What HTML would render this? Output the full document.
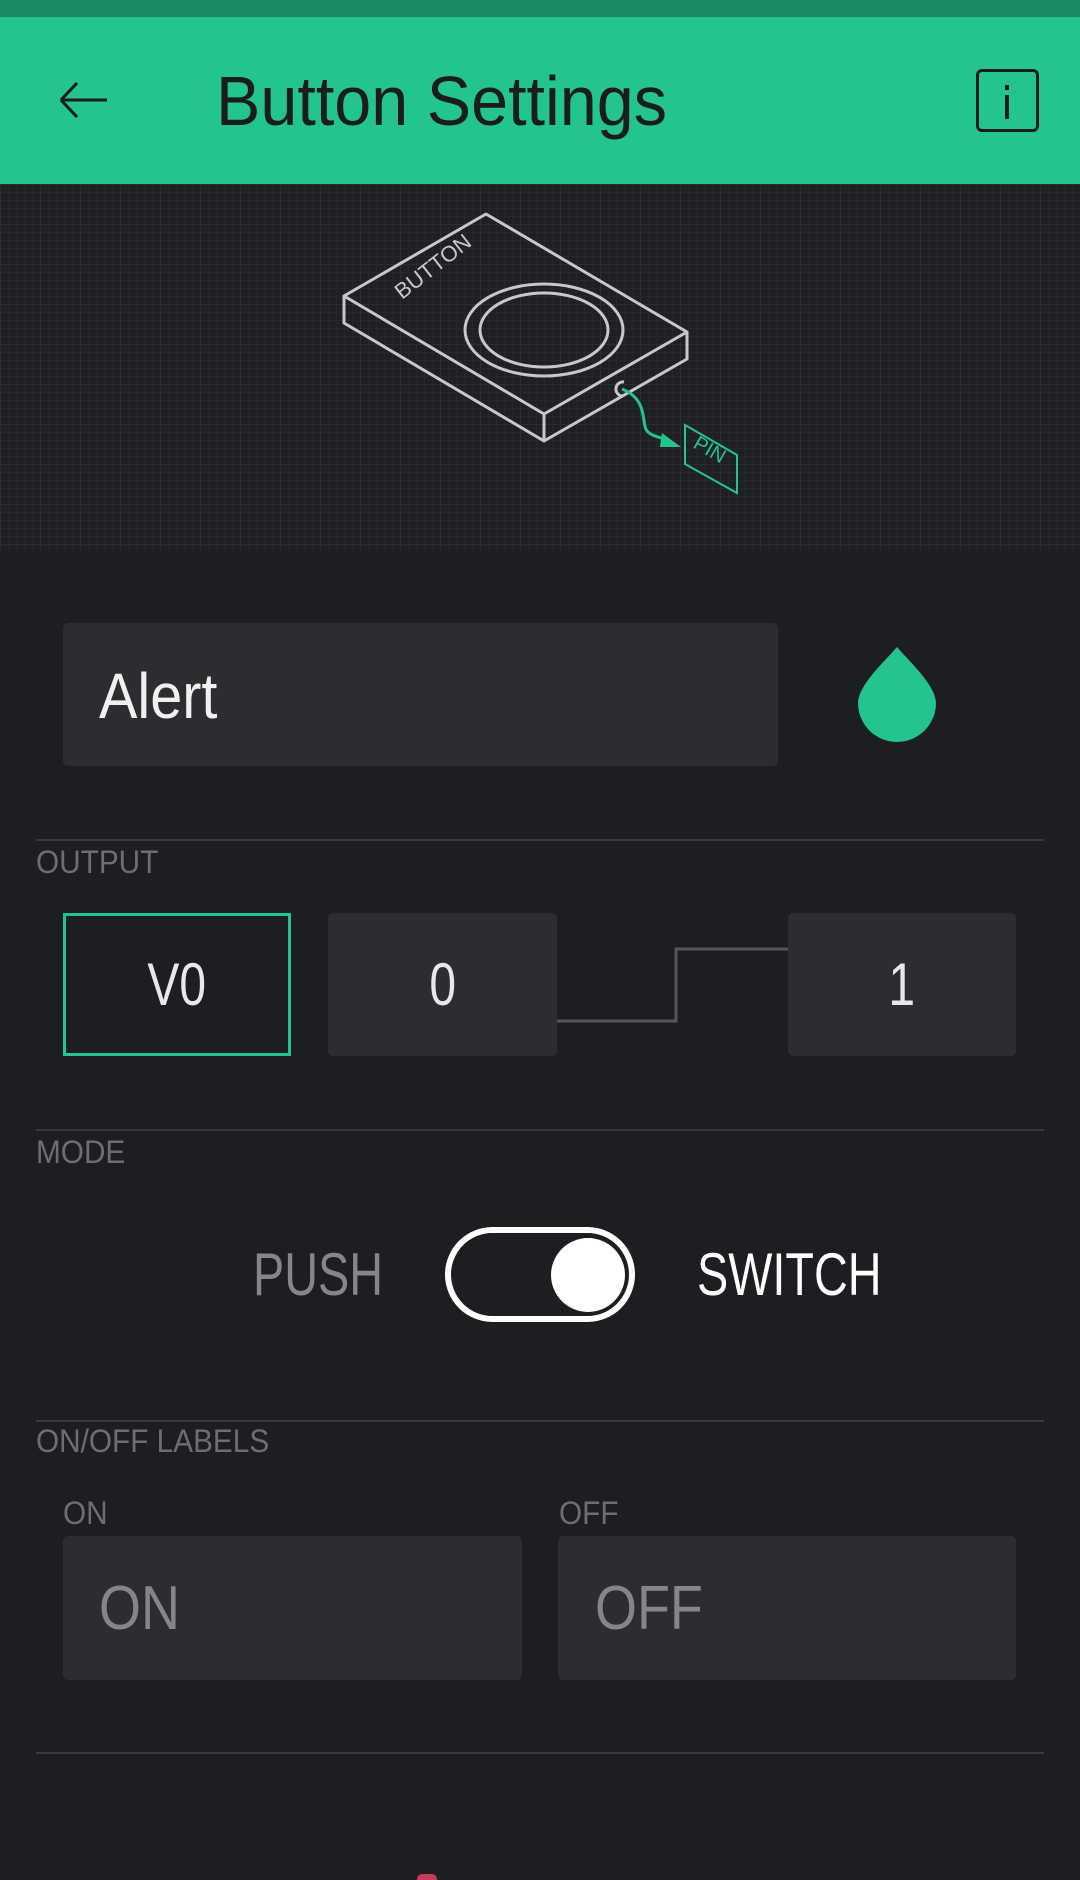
<!DOCTYPE html>
<html><head><meta charset="utf-8"><style>
*{margin:0;padding:0;box-sizing:border-box}
body{width:1080px;height:1877px;background:#1d1e22;position:relative;overflow:hidden;font-family:"Liberation Sans",sans-serif}
.a{position:absolute}
.t{position:absolute;white-space:nowrap;transform-origin:left center;transform:scaleX(0.8);line-height:1}
.box{position:absolute;background:#2c2d31;border-radius:5px}
.hr{position:absolute;left:36px;width:1008px;height:2px;background:#38393d}
.lbl{position:absolute;color:#6d6e72;font-size:32px;white-space:nowrap;transform-origin:left center;transform:scaleX(0.93);line-height:1}
.c{position:absolute;display:flex;align-items:center;justify-content:center;color:#e8e8e8;font-size:60px}
.c span{display:inline-block;transform:scaleX(0.8)}
</style></head><body>
<div class="a" style="left:0;top:0;width:1080px;height:17px;background:#1a8a63"></div>
<div class="a" style="left:0;top:17px;width:1080px;height:167px;background:#23c48e"></div>
<svg class="a" style="left:55px;top:75px" width="60" height="50" viewBox="0 0 60 50"><path d="M6 25H52M6 25L22 8M6 25L22 42" stroke="#1b1c1f" stroke-width="3" fill="none"/></svg>
<div class="t" style="left:216px;top:66px;font-size:70px;color:#1b1c1f;transform:scaleX(0.95)">Button Settings</div>
<div class="a" style="left:976px;top:69px;width:63px;height:63px;border:3px solid #1b1c1f;border-radius:6px"></div>
<div class="a" style="left:1005px;top:85px;width:4px;height:5px;background:#1b1c1f"></div>
<div class="a" style="left:1005px;top:95px;width:4px;height:24px;background:#1b1c1f"></div>
<div class="a" style="left:0;top:184px;width:1080px;height:367px;background-color:#1f2024;background-image:linear-gradient(#2c2d31 1px,transparent 1px),linear-gradient(90deg,#2c2d31 1px,transparent 1px),linear-gradient(#26272b 1px,transparent 1px),linear-gradient(90deg,#26272b 1px,transparent 1px);background-size:40px 40px,40px 40px,8px 8px,8px 8px"></div>
<svg class="a" style="left:0;top:0" width="1080" height="560">
<g fill="none" stroke="#c8c8c8" stroke-width="3" stroke-linejoin="round">
<path d="M486 214L344 296L544 414L687 332Z"/>
<path d="M344 296V323L544 441L687 359V332"/>
<path d="M544 414V441"/>
<ellipse cx="544" cy="330" rx="79" ry="46"/>
<ellipse cx="544" cy="330" rx="64" ry="37"/>
<path d="M624 382a6 6 0 1 0 -2 14"/>
</g>
<text x="0" y="0" fill="#c8c8c8" font-size="22" font-family="Liberation Sans" transform="translate(402 300) rotate(-38)">BUTTON</text>
<path d="M622 389C650 400 640 425 648 432C655 438 660 436 670 442" stroke="#23c48e" stroke-width="3" fill="none"/>
<path d="M662 433L681 447L660 447Z" fill="#23c48e"/>
<path d="M685 425L737 455V493L685 464Z" stroke="#23c48e" stroke-width="2" fill="none"/>
<text x="0" y="0" fill="#23c48e" font-size="20" font-family="Liberation Sans" transform="translate(692 447) rotate(30)">PIN</text>
</svg>
<div class="box" style="left:63px;top:623px;width:715px;height:143px"></div>
<div class="t" style="left:99px;top:664px;font-size:64px;color:#f0f0f0;transform:scaleX(0.9)">Alert</div>
<svg class="a" style="left:855px;top:645px" width="85" height="100" viewBox="0 0 85 100"><path d="M42 2C32 14 3 40 3 58a39 39 0 0 0 78 0C81 40 52 14 42 2Z" fill="#23c48e"/></svg>
<div class="hr" style="top:839px"></div>
<div class="lbl" style="left:36px;top:846px">OUTPUT</div>
<div class="c" style="left:63px;top:913px;width:228px;height:143px;border:3px solid #23c48e"><span>V0</span></div>
<div class="box c" style="left:328px;top:913px;width:229px;height:143px"><span>0</span></div>
<div class="box c" style="left:788px;top:913px;width:228px;height:143px"><span>1</span></div>
<svg class="a" style="left:0;top:0" width="1080" height="1100"><path d="M557 1021H676V949H788" stroke="#55565a" stroke-width="3" fill="none"/></svg>
<div class="hr" style="top:1129px"></div>
<div class="lbl" style="left:36px;top:1136px">MODE</div>
<div class="t" style="left:253px;top:1245px;font-size:60px;color:#85868a;transform:scaleX(0.78)">PUSH</div>
<div class="a" style="left:445px;top:1227px;width:190px;height:95px;border:6px solid #fff;border-radius:48px"></div>
<div class="a" style="left:551px;top:1238px;width:74px;height:74px;border-radius:50%;background:#fff"></div>
<div class="t" style="left:697px;top:1245px;font-size:60px;color:#fff;transform:scaleX(0.78)">SWITCH</div>
<div class="hr" style="top:1420px"></div>
<div class="lbl" style="left:36px;top:1425px">ON/OFF LABELS</div>
<div class="lbl" style="left:63px;top:1497px">ON</div>
<div class="lbl" style="left:559px;top:1497px">OFF</div>
<div class="box" style="left:63px;top:1536px;width:459px;height:144px"></div>
<div class="box" style="left:558px;top:1536px;width:458px;height:144px"></div>
<div class="t" style="left:99px;top:1578px;font-size:62px;color:#85868a;transform:scaleX(0.87)">ON</div>
<div class="t" style="left:595px;top:1578px;font-size:62px;color:#85868a;transform:scaleX(0.87)">OFF</div>
<div class="hr" style="top:1752px"></div>
<div class="a" style="left:417px;top:1874px;width:20px;height:6px;border-radius:5px 5px 0 0;background:#c8395a"></div>
</body></html>
